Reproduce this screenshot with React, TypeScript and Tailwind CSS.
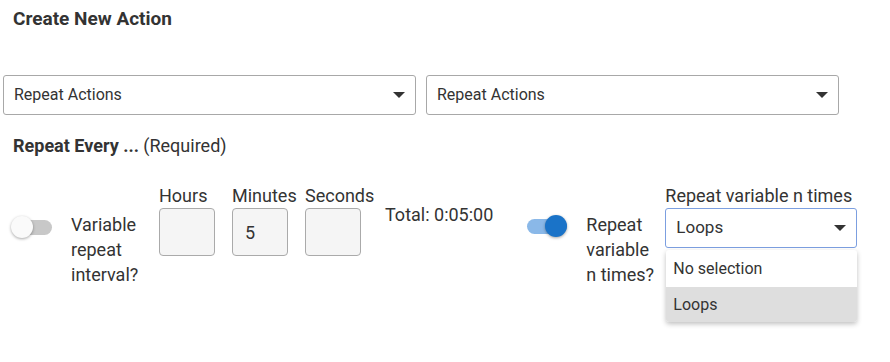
import { useState } from 'react'

function Caret() {
  return (
    <svg width="12" height="6" viewBox="0 0 12 6" className="shrink-0">
      <path d="M0 0h12L6 6z" fill="#333" />
    </svg>
  )
}

function SelectBox({ label, className }: { label: string; className?: string }) {
  return (
    <div
      className={`flex h-10 items-center justify-between rounded-[3px] border border-[#a8a8a8] bg-white pl-[10px] pr-[10px] text-[16px] text-[#333] ${className ?? ''}`}
    >
      <span>{label}</span>
      <Caret />
    </div>
  )
}

function Toggle({ on }: { on: boolean }) {
  return (
    <div className="relative h-[22px] w-[44px] shrink-0">
      <div
        className={`absolute left-[1px] top-[4px] h-[15px] w-[40px] rounded-full ${on ? 'bg-[#8ab8e8]' : 'bg-[#c8c8c8]'}`}
      />
      <div
        className={`absolute top-[0px] h-[22px] w-[22px] rounded-full shadow-[0_1px_3px_rgba(0,0,0,0.35)] ${on ? 'left-[19px] bg-[#1a73c8]' : 'left-0 bg-[#fafafa]'}`}
      />
    </div>
  )
}

function TimeField({ label, value }: { label: string; value?: string }) {
  return (
    <div className="flex w-[73px] flex-col">
      <div className="h-[22px] whitespace-nowrap leading-[22px]">{label}</div>
      <div className="mt-[1px] flex h-12 w-14 items-center rounded-[4px] border border-[#aaa] bg-[#f5f5f5] pl-[12px]">
        {value}
      </div>
    </div>
  )
}

export default function App() {
  const [open] = useState(true)

  return (
    <div className="h-[362px] w-[890px] bg-white font-['Roboto',sans-serif] text-[#333]">
      <h1 className="px-[13px] pt-[7px] text-[19px] font-bold leading-[24px]">Create New Action</h1>

      <div className="mt-[44px] flex gap-[10px] pl-[3px]">
        <SelectBox label="Repeat Actions" className="w-[413px]" />
        <SelectBox label="Repeat Actions" className="w-[413px]" />
      </div>

      <div className="mt-[19px] pl-[13px] text-[18px] leading-[24px]">
        <span className="font-bold">Repeat Every ...</span> (Required)
      </div>

      <div className="mt-[27px] flex items-start text-[18px]">
        <div className="ml-[11px] mt-[31px]">
          <Toggle on={false} />
        </div>
        <div className="ml-[16px] mt-[27px] w-[88px] leading-[25px]">
          Variable
          <br />
          repeat
          <br />
          interval?
        </div>
        <div className="flex">
          <TimeField label="Hours" />
          <TimeField label="Minutes" value="5" />
          <TimeField label="Seconds" />
        </div>
        <div className="ml-[7px] mt-[19px] whitespace-nowrap leading-[22px]">Total: 0:05:00</div>
        <div className="ml-[33px] mt-[30px]">
          <Toggle on />
        </div>
        <div className="ml-[16px] mt-[27px] w-[79px] leading-[25px]">
          Repeat
          <br />
          variable
          <br />
          n times?
        </div>
        <div className="relative flex w-[192px] flex-col">
          <div className="h-[22px] whitespace-nowrap leading-[22px]">Repeat variable n times</div>
          <div className="mt-[1px] flex h-10 items-center justify-between rounded-[3px] border border-[#7c9fe0] bg-white pl-[10px] pr-[10px] text-[17px]">
            <span>Loops</span>
            <Caret />
          </div>
          {open ? (
            <div className="absolute left-[1px] right-0 top-[65px] overflow-hidden rounded-[3px] bg-white text-[16px] shadow-[0_2px_5px_rgba(0,0,0,0.25)]">
              <div className="flex h-[37px] items-center px-[7px]">No selection</div>
              <div className="flex h-[35px] items-center bg-[#dedede] px-[7px]">Loops</div>
            </div>
          ) : null}
        </div>
      </div>
    </div>
  )
}
